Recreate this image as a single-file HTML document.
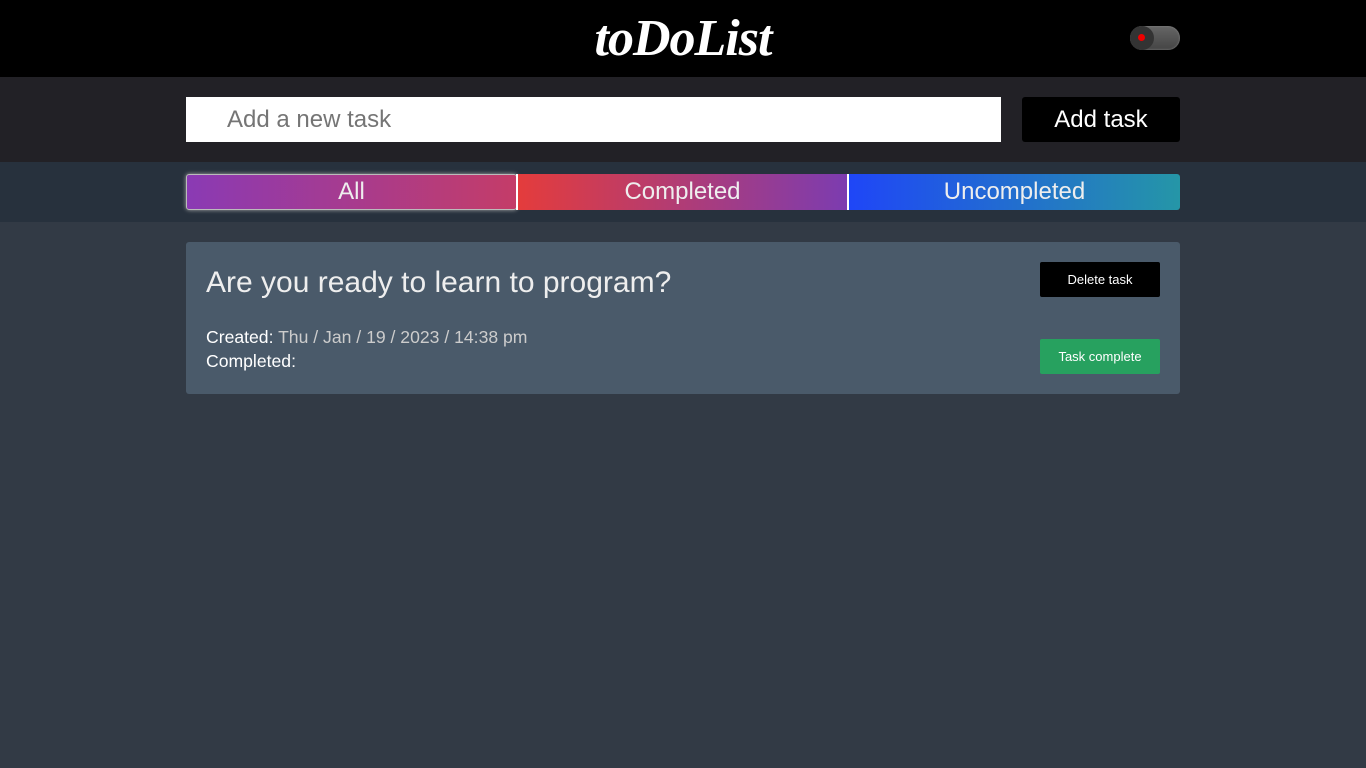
<!DOCTYPE html>
<html><head><style>
body{margin:0;width:1366px;height:768px;background:#323a45;font-family:"Liberation Sans",sans-serif;overflow:hidden}
.top{height:77px;background:#000;position:relative}
.logo{position:absolute;left:0;right:0;top:9px;text-align:center;color:#fff;font:italic bold 52px "Liberation Serif",serif;letter-spacing:-1px}
.tog{position:absolute;left:1130px;top:26px;width:50px;height:24px;border-radius:12px;background:linear-gradient(#666,#444);box-shadow:inset 0 0 2px #888}
.knob{position:absolute;left:0;top:0;width:24px;height:24px;border-radius:12px;background:#333}
.knob:after{content:"";position:absolute;left:8px;top:8px;width:7px;height:7px;border-radius:50%;background:#e00}
.bar{height:85px;background:#222126;position:relative}
.inp{position:absolute;left:186px;top:20px;width:815px;height:45px;background:#fff;color:#757575;font-size:24px;line-height:46px;box-sizing:border-box;padding-left:41px}
.add{position:absolute;left:1022px;top:20px;width:158px;height:45px;background:#000;color:#fff;font-size:24px;line-height:46px;text-align:center;border-radius:3px}
.tabs{height:60px;background:#27313d;position:relative}
.tab{position:absolute;top:12px;height:36px;line-height:36px;text-align:center;color:#eee;font-size:24px}
.card{position:absolute;left:186px;top:242px;width:994px;height:152px;background:#4a5a6a;border-radius:3px;color:#fff}
.btn{position:absolute;left:854px;width:120px;height:35px;line-height:35px;text-align:center;font-size:13px;border-radius:2px}
</style></head><body>
<div class="top"><div class="logo">toDoList</div><div class="tog"><div class="knob"></div></div></div>
<div class="bar"><div class="inp">Add a new task</div><div class="add">Add task</div></div>
<div class="tabs">
<div class="tab" style="left:186px;width:329px;background:linear-gradient(90deg,#8a3ab4,#c43c68);border:1px solid #bbb;border-radius:3px;box-shadow:0 0 4px #aaa;height:34px;line-height:34px">All</div>
<div class="tab" style="left:516px;width:2px;background:#fff"></div>
<div class="tab" style="left:518px;width:329px;background:linear-gradient(90deg,#e43c3c,#7c3cb0)">Completed</div>
<div class="tab" style="left:847px;width:2px;background:#fff"></div>
<div class="tab" style="left:849px;width:331px;background:linear-gradient(90deg,#1f46f7,#2596a7);border-radius:0 3px 3px 0">Uncompleted</div>
</div>
<div class="card">
<div style="position:absolute;left:20px;top:24px;font-size:30px;color:#eee">Are you ready to learn to program?</div>
<div style="position:absolute;left:20px;top:83px;font-size:17.6px;line-height:24px">Created: <span style="color:#ccc">Thu / Jan / 19 / 2023 / 14:38 pm</span><br>Completed:</div>
<div class="btn" style="top:20px;background:#000">Delete task</div>
<div class="btn" style="top:97px;background:#27a15f">Task complete</div>
</div>
</body></html>
